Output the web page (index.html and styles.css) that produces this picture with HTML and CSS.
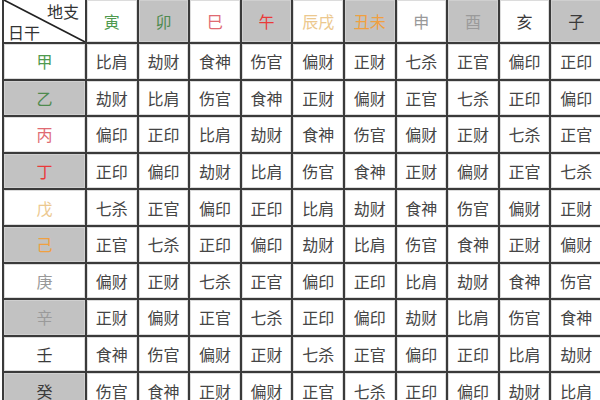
FILE: index.html
```html
<!DOCTYPE html>
<html lang="zh">
<head>
<meta charset="utf-8">
<link rel="stylesheet" href="styles.css">
</head>
<body>
<div class="grid">
  <div class="cell corner">
    <svg class="diag" viewBox="0 0 81 42" preserveAspectRatio="none"><line x1="0" y1="0" x2="81" y2="42" stroke="#222" stroke-width="1.6"/></svg>
    <span class="top">地支</span>
    <span class="bottom">日干</span>
  </div>
  <div class="cell head c-green">寅</div>
  <div class="cell head gray c-green2">卯</div>
  <div class="cell head c-pink">巳</div>
  <div class="cell head gray c-red">午</div>
  <div class="cell head c-tan">辰戌</div>
  <div class="cell head gray c-orange">丑未</div>
  <div class="cell head c-lgray">申</div>
  <div class="cell head gray c-mgray">酉</div>
  <div class="cell head c-dark">亥</div>
  <div class="cell head gray c-dark">子</div>

  <div class="cell label c-green">甲</div>
  <div class="cell">比肩</div><div class="cell">劫财</div><div class="cell">食神</div><div class="cell">伤官</div><div class="cell">偏财</div><div class="cell">正财</div><div class="cell">七杀</div><div class="cell">正官</div><div class="cell">偏印</div><div class="cell">正印</div>

  <div class="cell label gray c-green2">乙</div>
  <div class="cell">劫财</div><div class="cell">比肩</div><div class="cell">伤官</div><div class="cell">食神</div><div class="cell">正财</div><div class="cell">偏财</div><div class="cell">正官</div><div class="cell">七杀</div><div class="cell">正印</div><div class="cell">偏印</div>

  <div class="cell label c-pink">丙</div>
  <div class="cell">偏印</div><div class="cell">正印</div><div class="cell">比肩</div><div class="cell">劫财</div><div class="cell">食神</div><div class="cell">伤官</div><div class="cell">偏财</div><div class="cell">正财</div><div class="cell">七杀</div><div class="cell">正官</div>

  <div class="cell label gray c-red">丁</div>
  <div class="cell">正印</div><div class="cell">偏印</div><div class="cell">劫财</div><div class="cell">比肩</div><div class="cell">伤官</div><div class="cell">食神</div><div class="cell">正财</div><div class="cell">偏财</div><div class="cell">正官</div><div class="cell">七杀</div>

  <div class="cell label c-tan">戊</div>
  <div class="cell">七杀</div><div class="cell">正官</div><div class="cell">偏印</div><div class="cell">正印</div><div class="cell">比肩</div><div class="cell">劫财</div><div class="cell">食神</div><div class="cell">伤官</div><div class="cell">偏财</div><div class="cell">正财</div>

  <div class="cell label gray c-orange">己</div>
  <div class="cell">正官</div><div class="cell">七杀</div><div class="cell">正印</div><div class="cell">偏印</div><div class="cell">劫财</div><div class="cell">比肩</div><div class="cell">伤官</div><div class="cell">食神</div><div class="cell">正财</div><div class="cell">偏财</div>

  <div class="cell label c-lgray">庚</div>
  <div class="cell">偏财</div><div class="cell">正财</div><div class="cell">七杀</div><div class="cell">正官</div><div class="cell">偏印</div><div class="cell">正印</div><div class="cell">比肩</div><div class="cell">劫财</div><div class="cell">食神</div><div class="cell">伤官</div>

  <div class="cell label gray c-mgray">辛</div>
  <div class="cell">正财</div><div class="cell">偏财</div><div class="cell">正官</div><div class="cell">七杀</div><div class="cell">正印</div><div class="cell">偏印</div><div class="cell">劫财</div><div class="cell">比肩</div><div class="cell">伤官</div><div class="cell">食神</div>

  <div class="cell label c-dark">壬</div>
  <div class="cell">食神</div><div class="cell">伤官</div><div class="cell">偏财</div><div class="cell">正财</div><div class="cell">七杀</div><div class="cell">正官</div><div class="cell">偏印</div><div class="cell">正印</div><div class="cell">比肩</div><div class="cell">劫财</div>

  <div class="cell label gray c-dark">癸</div>
  <div class="cell">伤官</div><div class="cell">食神</div><div class="cell">正财</div><div class="cell">偏财</div><div class="cell">正官</div><div class="cell">七杀</div><div class="cell">正印</div><div class="cell">偏印</div><div class="cell">劫财</div><div class="cell">比肩</div>
</div>
</body>
</html>
```

FILE: styles.css
```css
html, body {
  margin: 0;
  padding: 0;
  background: #fff;
  overflow: hidden;
}
body {
  width: 600px;
  height: 400px;
  font-family: "Noto Sans CJK SC", "Noto Sans", sans-serif;
}
.grid {
  margin-left: 2px;
  display: grid;
  grid-template-columns: 81px repeat(10, 49.6px);
  grid-template-rows: 42px repeat(10, 34.6px);
  gap: 2px;
  padding-left: 2px;
  background: #3a3a3a;
  width: max-content;
}
.cell {
  background: #fff;
  box-shadow: inset 0 0 0 1px #dcdcdc;
  display: flex;
  align-items: center;
  justify-content: center;
  font-size: 16px;
  color: #454545;
  line-height: 1;
  white-space: nowrap;
}
.cell.gray {
  background: #c2c2c2;
  box-shadow: inset 0 0 0 1px #cfcfcf;
}
.head { font-size: 16px; }
.corner {
  position: relative;
  box-shadow: none;
  color: #333;
}
.diag {
  position: absolute;
  left: 0;
  top: 0;
  width: 100%;
  height: 100%;
}
.corner .top {
  position: absolute;
  right: 6px;
  top: 3px;
}
.corner .bottom {
  position: absolute;
  left: 4px;
  bottom: 2px;
}
.c-green { color: #4f9a4f; }
.c-green2 { color: #4e8a4e; }
.c-pink { color: #e06a72; }
.c-red { color: #ea3a3a; }
.c-tan { color: #ecc88e; }
.c-orange { color: #f0a040; }
.c-lgray { color: #999; }
.c-mgray { color: #9a9a9a; }
.c-dark { color: #3a3a3a; }
```
